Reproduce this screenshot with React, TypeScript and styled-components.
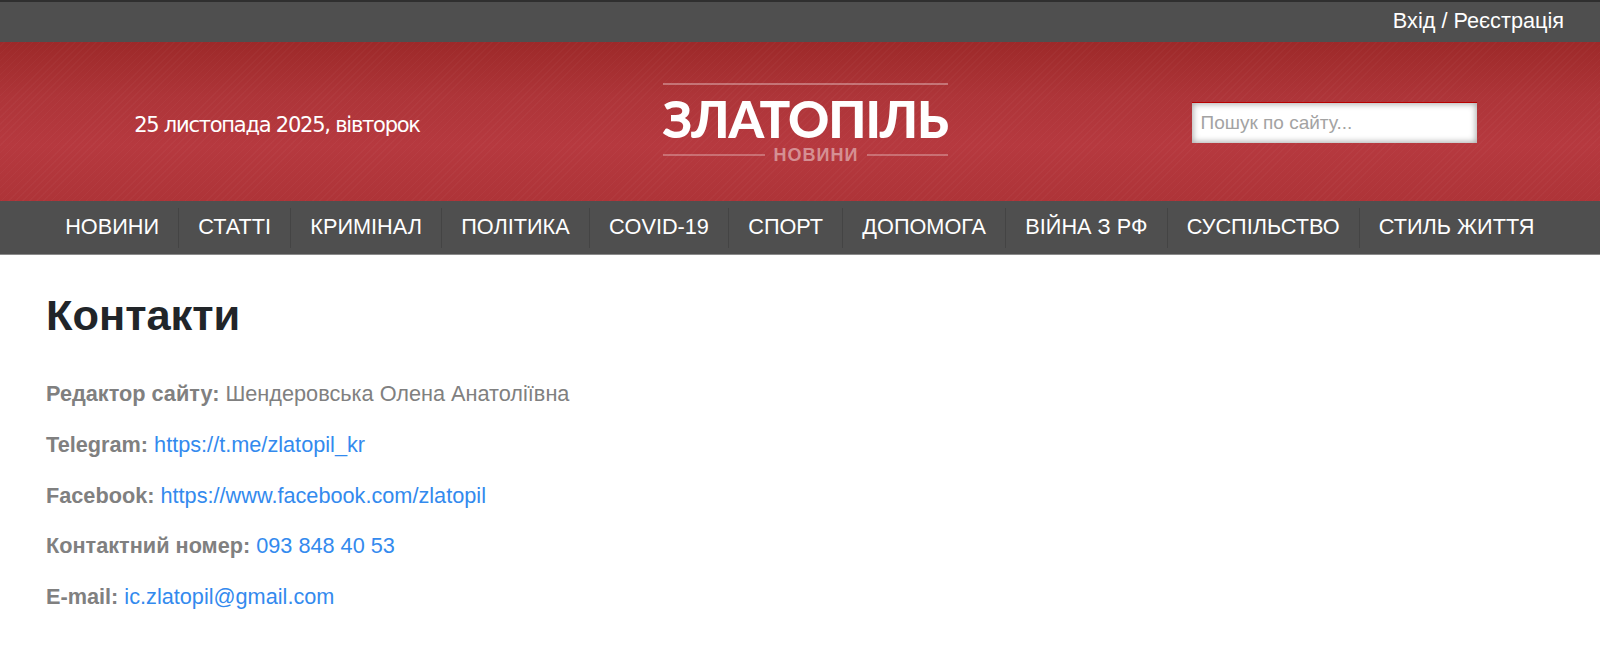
import { createGlobalStyle, styled } from "styled-components";

const GlobalStyle = createGlobalStyle`
  html, body {
    margin: 0;
    padding: 0;
    background: #fff;
    font-family: "Liberation Sans", Arial, sans-serif;
  }
  * { box-sizing: border-box; }
`;

const TopBar = styled.div`
  height: 42px;
  background: #4f4f4f;
  border-top: 2px solid #2f2f2f;
  display: flex;
  justify-content: flex-end;
  align-items: center;
  padding: 0 36px 2px 0;
`;

const LoginLink = styled.a`
  color: #fff;
  font-size: 21.7px;
  text-decoration: none;
`;

const Header = styled.header`
  height: 159px;
  padding: 3px 0 0 13px;
  display: grid;
  grid-template-columns: repeat(3, 528px);
  align-items: center;
  justify-items: center;
  background:
    repeating-linear-gradient(-45deg, rgba(255, 255, 255, 0.025) 0 1px, transparent 1px 5px),
    linear-gradient(180deg, #9d2929 0%, #ae3539 35%, #b6393f 65%, #ae3438 100%);
`;

const DateText = styled.div`
  color: #fff;
  font-family: "DejaVu Sans", sans-serif;
  font-size: 21px;
  letter-spacing: -1.24px;
  margin-top: 3px;
  white-space: nowrap;
`;

const Logo = styled.div`
  width: 285px;
  display: flex;
  flex-direction: column;
  align-items: stretch;
`;

const LogoRule = styled.div`
  height: 2px;
  background: rgba(255, 255, 255, 0.32);
`;

const LogoTitle = styled.div`
  color: #fff;
  font-family: Lato, sans-serif;
  font-weight: 900;
  font-size: 51px;
  line-height: 50px;
  letter-spacing: -1.1px;
  margin: 9px 0 2px;
  text-align: center;
  white-space: nowrap;
`;

const LogoSub = styled.div`
  display: flex;
  align-items: center;
  gap: 9px;
  color: rgba(255, 255, 255, 0.45);
  font-size: 18px;
  line-height: 18px;
  font-weight: 700;
  letter-spacing: 1px;
`;

const SubRule = styled(LogoRule)<{ $width?: number }>`
  flex: ${(p) => (p.$width ? `0 0 ${p.$width}px` : "1")};
  background: rgba(255, 255, 255, 0.28);
`;

const SearchInput = styled.input`
  width: 285px;
  height: 41px;
  margin: 0 0 2px 2px;
  border: none;
  border-top: 1px solid #b80000;
  background: #fff;
  box-shadow: inset 0 0 6px 1px rgba(0, 0, 0, 0.35);
  padding: 0 9px;
  font-family: "Liberation Sans", Arial, sans-serif;
  font-size: 19px;
  outline: none;
  &::placeholder {
    color: #a3a3a3;
    opacity: 1;
  }
`;

const Nav = styled.nav`
  height: 54px;
  background: #4f4f4f;
  border-bottom: 1px solid #8a8a8a;
  display: flex;
  align-items: center;
  padding-left: 46px;
`;

const NavItem = styled.a<{ $last?: boolean }>`
  height: 40px;
  display: flex;
  align-items: center;
  padding: 0 19.15px 1px;
  color: #fff;
  font-size: 21.7px;
  white-space: nowrap;
  text-decoration: none;
  border-right: ${(p) => (p.$last ? "none" : "1px solid #444")};
`;

const Content = styled.main`
  padding: 36px 46px 0;
`;

const Title = styled.h1`
  margin: 0 0 42px;
  font-size: 43.4px;
  line-height: 48px;
  font-weight: 700;
  color: #212529;
`;

const Row = styled.p`
  margin: 0 0 24.8px;
  font-size: 21.7px;
  line-height: 26px;
  color: #808080;
`;

const Label = styled.b`
  font-weight: 700;
`;

const ContactLink = styled.a`
  color: #338aee;
  text-decoration: none;
`;

const navItems = [
  "НОВИНИ",
  "СТАТТІ",
  "КРИМІНАЛ",
  "ПОЛІТИКА",
  "COVID-19",
  "СПОРТ",
  "ДОПОМОГА",
  "ВІЙНА З РФ",
  "СУСПІЛЬСТВО",
  "СТИЛЬ ЖИТТЯ",
];

const contacts = [
  { label: "Telegram:", value: "https://t.me/zlatopil_kr" },
  { label: "Facebook:", value: "https://www.facebook.com/zlatopil" },
  { label: "Контактний номер:", value: "093 848 40 53" },
  { label: "E-mail:", value: "ic.zlatopil@gmail.com" },
];

function App() {
  return (
    <>
      <GlobalStyle />
      <TopBar>
        <LoginLink href="#">Вхід / Реєстрація</LoginLink>
      </TopBar>
      <Header>
        <DateText>25 листопада 2025, вівторок</DateText>
        <Logo>
          <LogoRule />
          <LogoTitle>ЗЛАТОПІЛЬ</LogoTitle>
          <LogoSub>
            <SubRule $width={102} />
            НОВИНИ
            <SubRule />
          </LogoSub>
        </Logo>
        <SearchInput placeholder="Пошук по сайту..." />
      </Header>
      <Nav>
        {navItems.map((item, index) => (
          <NavItem href="#" key={item} $last={index === navItems.length - 1}>
            {item}
          </NavItem>
        ))}
      </Nav>
      <Content>
        <Title>Контакти</Title>
        <Row>
          <Label>Редактор сайту:</Label> Шендеровська Олена Анатоліївна
        </Row>
        {contacts.map((c) => (
          <Row key={c.label}>
            <Label>{c.label}</Label> <ContactLink href="#">{c.value}</ContactLink>
          </Row>
        ))}
      </Content>
    </>
  );
}

export default App;
